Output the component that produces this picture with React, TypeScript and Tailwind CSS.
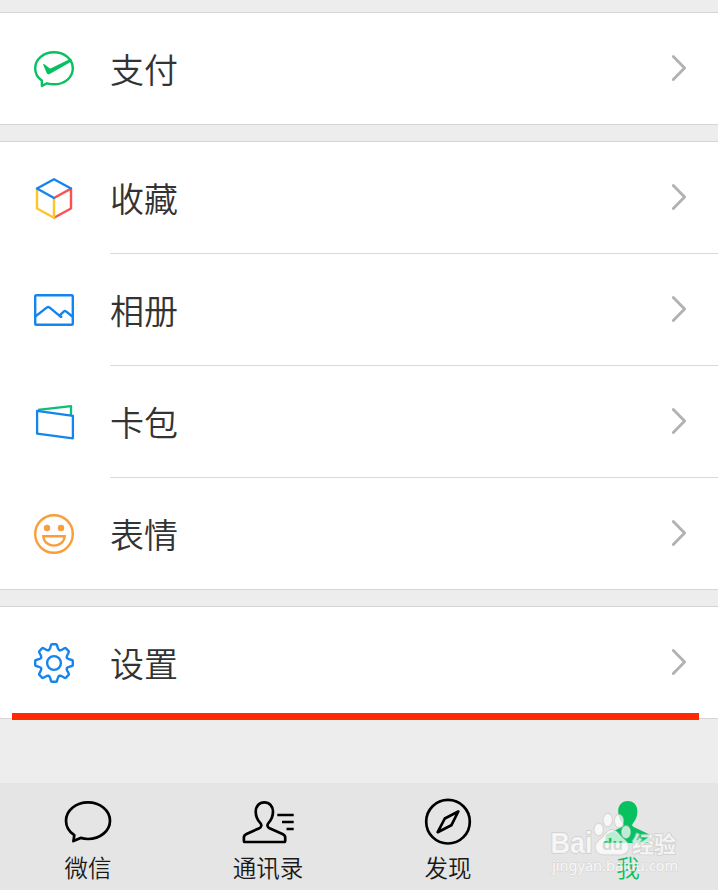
import type { ReactNode } from "react";

interface Item {
  label: string;
  icon: ReactNode;
}

const TOOTH_ANGLES = [0, 45, 90, 135, 180, 225, 270, 315];

function PayIcon() {
  return (
    <svg className="h-12 w-12" viewBox="0 0 48 48" fill="none">
      <path d="M11.800 36.400C7.600 33.600 5.200 29.300 5.200 24.500C5.200 15.400 13.500 8.200 24 8.200s18.800 7.200 18.800 16.300S34.500 40.300 24 40.300c-2.500 0-4.800-.4-7-1l-5.100 2.600z" stroke="#07c160" strokeWidth="2.400" strokeLinejoin="round" />
      <path d="M13 20.300q.8-.5 1.800.2l4.400 3.600q.8.500 1.800.1L41 14.500l1 2.700-22.300 12.800q-2 1.200-3-.9z" fill="#07c160" />
    </svg>
  );
}

function CubeIcon() {
  return (
    <svg className="h-12 w-12" viewBox="0 0 48 48" fill="none" strokeWidth="2.400" strokeLinejoin="round" strokeLinecap="round">
      <path d="M41 15.800v19.700L24 44.700M24 25l17-9.400" stroke="#fa5151" />
      <path d="M7 15.800v19.700L24 44.700V25" stroke="#ffc32b" />
      <path d="M24 25L7 15.500L24 6.200l17 9.300" stroke="#1485ee" />
    </svg>
  );
}

function PhotoIcon() {
  return (
    <svg className="h-12 w-12" viewBox="0 0 48 48" fill="none" stroke="#1485ee" strokeWidth="2.400" strokeLinejoin="round">
      <rect x="5.200" y="10.200" width="37.600" height="29.600" rx="1" />
      <path d="M5 31.800L17 22.400q1.200-.8 2.400 0L30.500 31.700h1.800M29.300 30.700L34 26.400q1-.9 2 0L43 32" />
    </svg>
  );
}

function CardIcon() {
  return (
    <svg className="h-12 w-12" viewBox="0 0 48 48" fill="none" strokeWidth="2.300" strokeLinejoin="round">
      <path d="M8 12.800L41 9.200V18" stroke="#07c17a" />
      <path d="M7.100 13.800l35.800 5v22.500L7.100 36.600z" stroke="#1485ee" fill="#fff" />
    </svg>
  );
}

function SmileIcon() {
  return (
    <svg className="h-12 w-12" viewBox="0 0 48 48" fill="none" stroke="#fa9d3b" strokeWidth="2.400">
      <circle cx="24" cy="25" r="18.800" />
      <circle cx="17" cy="19" r="3.200" fill="#fa9d3b" stroke="none" />
      <circle cx="31" cy="19" r="3.200" fill="#fa9d3b" stroke="none" />
      <path d="M13.300 27.200h21.400c-.3 5.600-5 9.400-10.700 9.400s-10.400-3.800-10.700-9.400z" />
    </svg>
  );
}

function GearIcon() {
  return (
    <svg className="h-12 w-12" viewBox="0 0 48 48" fill="none" stroke="#1485ee" strokeWidth="2.400">
      <g transform="translate(24 25)">
        {TOOTH_ANGLES.map((a) => (
          <path
            key={a}
            transform={`rotate(${a})`}
            strokeLinecap="round"
            d="M-5.400-12.900Q-4.200-13.400-3.800-15L-3-17.800Q-2.700-18.800-1.900-18.800H1.900Q2.700-18.800 3-17.800L3.800-15Q4.200-13.400 5.400-12.900"
          />
        ))}
        <circle r="6.900" />
      </g>
    </svg>
  );
}

function ChatIcon() {
  return (
    <svg className="h-12 w-16" viewBox="0 0 64 48" fill="none" stroke="#000" strokeWidth="2.700" strokeLinejoin="round">
      <path d="M18.300 38.200C13.200 34.800 10 29.600 10 23.700C10 13.600 19.800 5.400 32 5.400s22 8.200 22 18.300S44.200 42 32 42c-2.600 0-5.100-.4-7.400-1.100l-7.200 3.200z" />
    </svg>
  );
}

function ContactsIcon() {
  return (
    <svg className="h-12 w-16" viewBox="0 0 64 48" fill="none" stroke="#000" strokeWidth="2.700">
      <path d="M28.300 5.400c-5.200 0-8.600 3.800-8.600 9.200 0 5 1.800 8.600 4.500 11.300 1.800 1.900 1.400 4.300-.9 5.300L10.500 36.900C8.500 37.800 7.900 38.800 7.900 40.500V43.800q0 1.200 1.200 1.200H48q1.200 0 1.200-1.200V40.500C49.200 38.800 48.500 37.800 46.500 36.900L33.500 31.200c-2.300-1-2.700-3.400-.9-5.300 2.500-2.700 4.400-6.300 4.400-11.300 0-5.400-3.500-9.200-8.700-9.200z" />
      <path d="M41.300 18h16.400M46 25h11.700M50.500 32h7.200" />
    </svg>
  );
}

function CompassIcon() {
  return (
    <svg className="h-12 w-16" viewBox="0 0 64 48" fill="none" stroke="#000" strokeWidth="2.700" strokeLinejoin="round">
      <circle cx="32" cy="24.700" r="21.800" />
      <path d="M42.300 14.500L28.800 21.500L21.700 35.200L35.300 28.300z" />
    </svg>
  );
}

function MeIcon() {
  return (
    <svg className="h-12 w-16" viewBox="0 0 64 48" fill="#07c160">
      <path d="M31.800 4c-6 0-9.600 4.400-9.600 10.200 0 5.400 1.900 9.200 4.700 12.400 1.100 1.300.7 2.800-.9 3.500L12.500 36.200c-2.200 1-2.900 2.300-2.900 4.200V45q0 1 1 1h42.200q1 0 1-1v-4.600c0-1.900-.7-3.200-2.900-4.200L37.700 30.100c-1.600-.7-2-2.200-.9-3.500 2.700-3.200 4.600-7 4.600-12.400C41.400 8.400 37.800 4 31.800 4z" />
    </svg>
  );
}

const GROUPS: Item[][] = [
  [{ label: "支付", icon: <PayIcon /> }],
  [
    { label: "收藏", icon: <CubeIcon /> },
    { label: "相册", icon: <PhotoIcon /> },
    { label: "卡包", icon: <CardIcon /> },
    { label: "表情", icon: <SmileIcon /> },
  ],
  [{ label: "设置", icon: <GearIcon /> }],
];

const TABS: Item[] = [
  { label: "微信", icon: <ChatIcon /> },
  { label: "通讯录", icon: <ContactsIcon /> },
  { label: "发现", icon: <CompassIcon /> },
  { label: "我", icon: <MeIcon /> },
];

function Row({ item, last }: { item: Item; last: boolean }) {
  return (
    <div className="flex pl-[30px]">
      <div className="h-[111px] w-20 shrink-0 pt-[31px]">{item.icon}</div>
      <div className={`flex flex-1 justify-between pr-[31px] ${last ? "" : "border-b border-[#d9d9d9]"}`}>
        <span className="h-[111px] text-[34px] leading-[112px] font-[350] text-[#333]">{item.label}</span>
        <svg className="mt-[41px] h-7 w-4" viewBox="0 0 16 28" fill="none" stroke="#b2b2b2" strokeWidth="2.900" strokeLinecap="round" strokeLinejoin="round">
          <path d="M2.300 2.600L13.600 14L2.300 25.400" />
        </svg>
      </div>
    </div>
  );
}

// Semi-transparent site mark over the last tab
function Watermark() {
  return (
    <div className="pointer-events-none absolute top-[20px] left-[548px] h-[76px] w-[134px]">
      <svg className="h-full w-full" viewBox="0 0 134 76">
        <defs>
          <linearGradient id="du" gradientUnits="userSpaceOnUse" x1="0" y1="39" x2="0" y2="40.500">
            <stop offset="0" stopColor="#1fbf6c" />
            <stop offset="1" stopColor="#d4d9d6" />
          </linearGradient>
        </defs>
        <g fill="#fff" fillOpacity="0.720" stroke="#c4c4c4" strokeOpacity="0.550" strokeWidth="1.800" strokeLinejoin="round" paintOrder="stroke">
          <text x="2.500" y="50" fontFamily="Liberation Sans, sans-serif" fontWeight="700" fontSize="29" textLength="42" lengthAdjust="spacingAndGlyphs">Bai</text>
          <ellipse cx="50.700" cy="26.500" rx="4.300" ry="6" />
          <ellipse cx="59.700" cy="17" rx="4.300" ry="6.300" />
          <ellipse cx="71" cy="18" rx="4.300" ry="6.300" />
          <ellipse cx="78" cy="29" rx="4.300" ry="6" />
          <path d="M64 27c5 0 7 5 11 8.500 4 3.500 6 6 5.500 9.500-.5 4-3.500 6.500-8.500 6.500H56c-5 0-8.500-3-8.500-7.500 0-4 3-6 6.500-9 4-3.500 5-8 10-8z" />
          <text x="84" y="48.500" fontFamily="Noto Sans CJK SC, sans-serif" fontWeight="700" fontSize="22" textLength="44">经验</text>
        </g>
        <text x="54" y="46.500" fill="url(#du)" fontFamily="Liberation Sans, sans-serif" fontWeight="700" fontSize="17" textLength="21">du</text>
        <text x="4" y="68" fill="#fff" fillOpacity="0.800" stroke="#c4c4c4" strokeOpacity="0.350" strokeWidth="1.400" paintOrder="stroke" fontFamily="Noto Sans, sans-serif" fontSize="14.500" textLength="126">jingyan.baidu.com</text>
      </svg>
    </div>
  );
}

export default function App() {
  return (
    <div className="relative flex h-[890px] w-[718px] flex-col overflow-hidden bg-[#ededed] pt-3 font-['Noto_Sans_CJK_SC',sans-serif]">
      <div className="flex flex-col gap-4">
        {GROUPS.map((group) => (
          <section key={group[0].label} className="border-y border-[#d5d5d5] bg-white">
            {group.map((item, i) => (
              <Row key={item.label} item={item} last={i === group.length - 1} />
            ))}
          </section>
        ))}
      </div>
      {/* red underline below the settings row */}
      <div className="absolute top-[713px] left-[12px] h-[7px] w-[687px] bg-[#ff2a00]" />

      <nav className="relative mt-auto h-[107px] bg-[#e5e5e5]">
        <div className="-ml-0.5 flex w-[720px]">
          {TABS.map((tab) => (
            <div key={tab.label} className="flex w-[180px] flex-col items-center pt-3.5">
              {tab.icon}
              <span className={`mt-[5px] text-[23.500px] leading-[34px] font-[350] ${tab.label === "我" ? "text-[#07c160]" : "text-[#191919]"}`}>
                {tab.label}
              </span>
            </div>
          ))}
        </div>
        <Watermark />
      </nav>
    </div>
  );
}
